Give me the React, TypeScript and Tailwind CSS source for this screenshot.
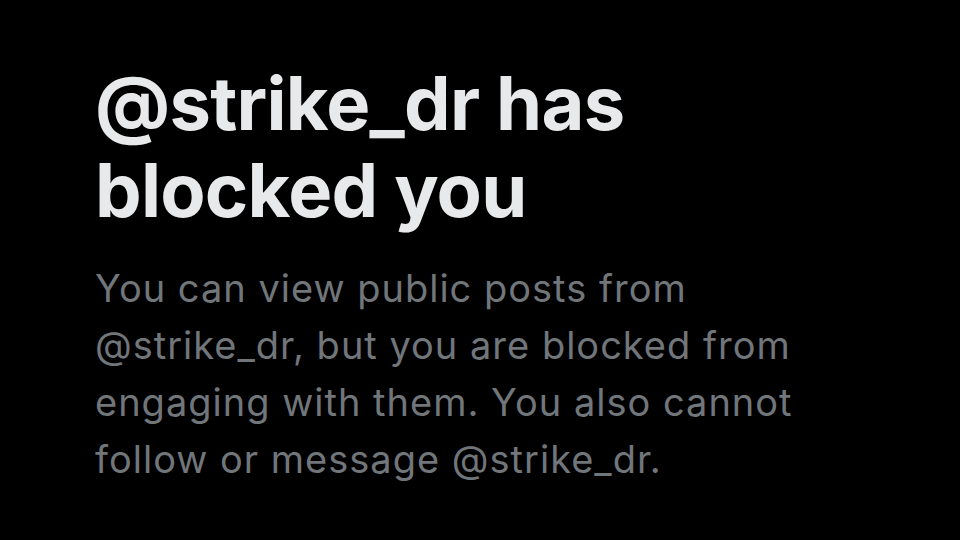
export default function App() {
  return (
    <div className="w-[960px] h-[540px] bg-black overflow-hidden">
      <div className="pl-[95px] pt-[60px] pr-[40px]" style={{ fontFamily: "Inter, 'Liberation Sans', sans-serif" }}>
        <h1 className="text-[74px] leading-[87px] font-bold text-[#e7e9ea] tracking-[-0.75px]">
          @strike_dr has
          <br />
          blocked you
        </h1>
        <p className="mt-[26px] text-[38px] leading-[57px] tracking-[1px] text-[#71767b]">
          You can view public posts from
          <br />
          @strike_dr, but you are blocked from
          <br />
          engaging with them. You also cannot
          <br />
          follow or message @strike_dr.
        </p>
      </div>
    </div>
  );
}
